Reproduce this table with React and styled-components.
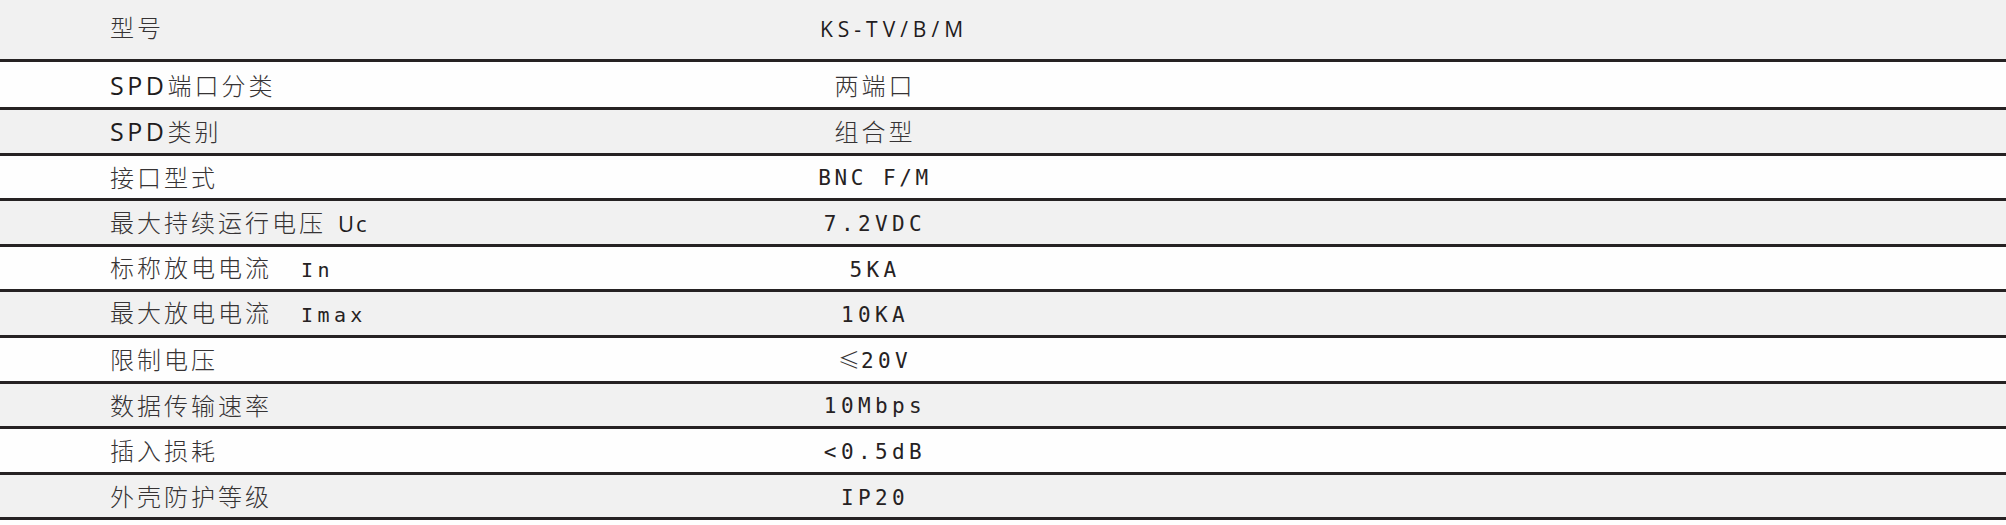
import React from "react";
import styled, { createGlobalStyle } from "styled-components";

const GlobalStyle = createGlobalStyle`
  html, body {
    margin: 0;
    padding: 0;
    background: #fefefe;
  }
  body {
    width: 2006px;
    height: 525px;
    overflow: hidden;
  }
`;

const Table = styled.div`
  display: flex;
  flex-direction: column;
  width: 2006px;
  color: #2a2727;
  font-family: "Noto Sans CJK SC", "Noto Sans", sans-serif;
`;

const Row = styled.div`
  display: grid;
  grid-template-columns: 700px 350px 1fr;
  align-items: ${(p) => (p.$top ? "start" : "center")};
  height: ${(p) => p.$h}px;
  padding-top: ${(p) => (p.$top ? 12 : 0)}px;
  box-sizing: content-box;
  background: ${(p) => (p.$shade ? "#f1f1f1" : "#fefefe")};
  border-bottom: 3px solid #262223;
`;

const Label = styled.div`
  padding-left: 110px;
  font-size: 24px;
  line-height: 30px;
  letter-spacing: 3px;
  font-weight: 300;
  color: #363334;
  white-space: nowrap;
`;

const Value = styled.div`
  text-align: center;
  padding-left: ${(p) => p.$shift || 0}px;
  font-size: 24px;
  line-height: 30px;
  letter-spacing: 3px;
  font-weight: 300;
  color: #363334;
  white-space: nowrap;
`;

const Sans = styled.span`
  font-family: "Open Sans", "Liberation Sans", sans-serif;
  font-weight: 400;
  font-size: ${(p) => p.$size || 25}px;
  letter-spacing: ${(p) => p.$ls ?? 3.5}px;
  margin-left: ${(p) => p.$lead || 0}px;
  color: #1f1c1d;
`;

const Mono = styled.span`
  font-family: "DejaVu Sans Mono", "Liberation Mono", monospace;
  font-weight: 400;
  font-size: ${(p) => p.$size || 21}px;
  letter-spacing: ${(p) => p.$ls ?? 4.4}px;
  margin-left: ${(p) => p.$lead || 0}px;
  color: #262223;
`;

const Sign = styled.span`
  font-family: "Noto Sans CJK SC", sans-serif;
  font-size: 22px;
  font-weight: 300;
  letter-spacing: 1px;
  color: #363334;
`;

const specs = [
  {
    label: "型号",
    value: <Sans $size={21} $ls={5}>KS-TV/B/M</Sans>,
    shift: 38,
    h: 47,
    top: true,
  },
  { label: <><Sans>SPD</Sans>端口分类</>, value: "两端口", h: 45 },
  { label: <><Sans>SPD</Sans>类别</>, value: "组合型" },
  { label: "接口型式", value: <Mono $ls={3.6}>BNC F/M</Mono> },
  {
    label: <>最大持续运行电压<Sans $size={22} $ls={2} $lead={12}>Uc</Sans></>,
    value: <Mono>7.2VDC</Mono>,
  },
  { label: <>标称放电电流<Mono $size={20} $lead={29}>In</Mono></>, value: <Mono>5KA</Mono> },
  { label: <>最大放电电流<Mono $size={20} $lead={29}>Imax</Mono></>, value: <Mono>10KA</Mono> },
  { label: "限制电压", value: <><Sign>≤</Sign><Mono>20V</Mono></> },
  { label: "数据传输速率", value: <Mono>10Mbps</Mono> },
  { label: "插入损耗", value: <Mono>&lt;0.5dB</Mono> },
  { label: "外壳防护等级", value: <Mono>IP20</Mono> },
];

export default function App() {
  return (
    <>
      <GlobalStyle />
      <Table>
        {specs.map((s, i) => (
          <Row key={i} $shade={i % 2 === 0} $h={s.h || 42.6} $top={s.top}>
            <Label>{s.label}</Label>
            <Value $shift={s.shift}>{s.value}</Value>
            <div />
          </Row>
        ))}
      </Table>
    </>
  );
}
